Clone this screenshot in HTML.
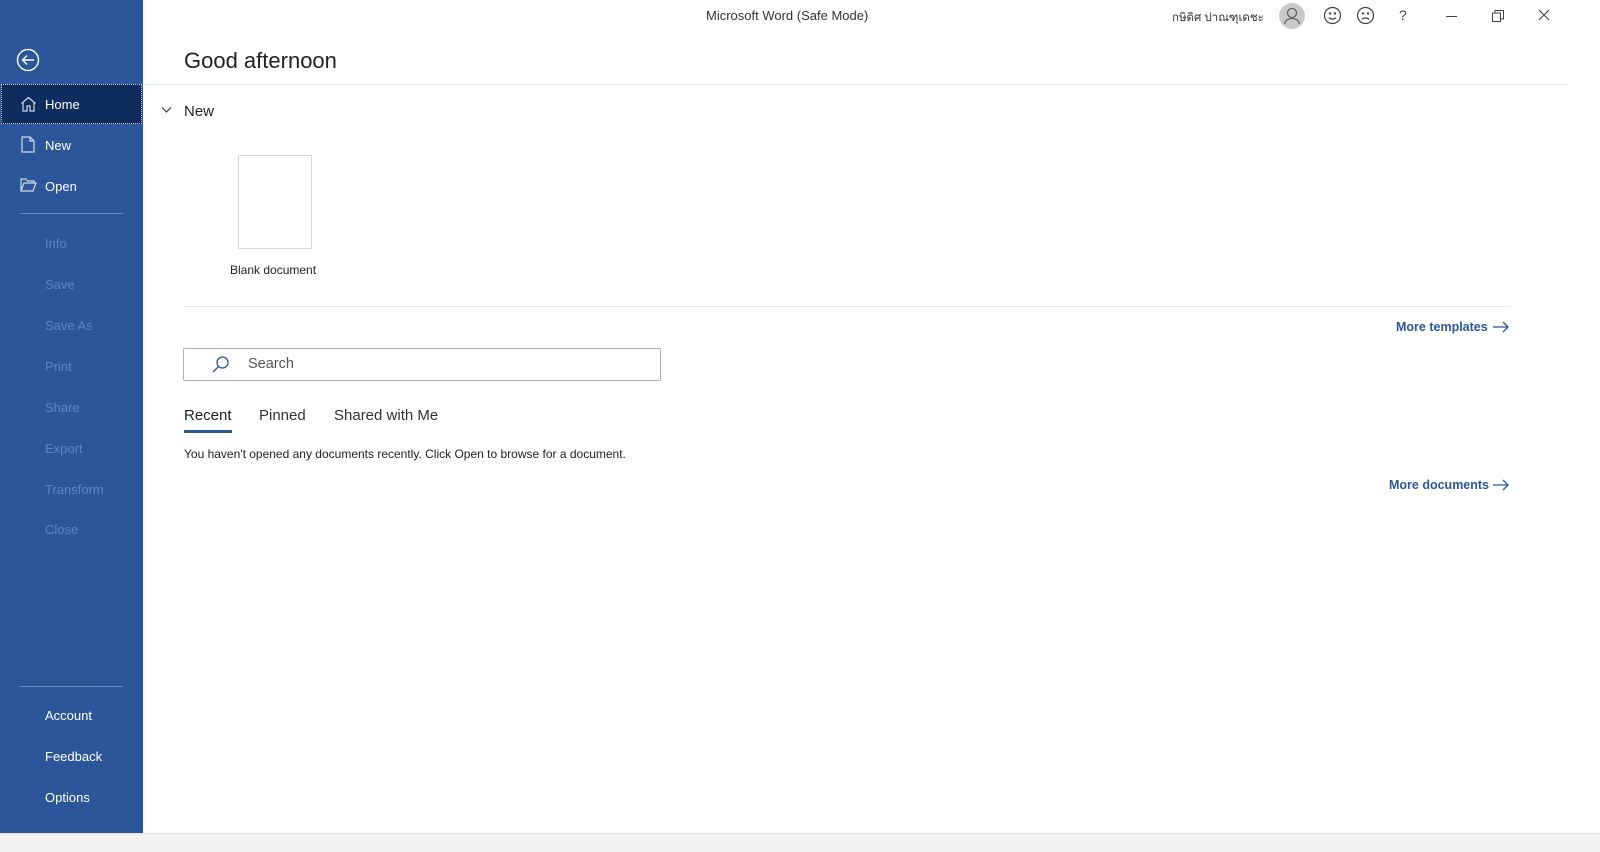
<!DOCTYPE html>
<html><head><meta charset="utf-8">
<style>
*{margin:0;padding:0;box-sizing:border-box}
body{width:1600px;height:852px;background:#fff;font-family:"Liberation Sans",sans-serif;position:relative;overflow:hidden;color:#333}
.side{position:absolute;left:0;top:0;width:143px;height:833px;background:#2b579a;color:#fff}
.bottom{position:absolute;left:0;top:833px;width:1600px;height:19px;background:#f3f3f3;border-top:1px solid #e1e1e1}
.it{position:absolute;left:45px;font-size:13px}
.dim{color:#5f83bf}
.abs{position:absolute}
.t{position:absolute;white-space:nowrap}
</style></head><body>
<div class="side">
  <svg class="abs" style="left:16px;top:48px" width="24" height="24" viewBox="0 0 24 24" fill="none" stroke="#fff" stroke-width="1.4"><circle cx="12" cy="12" r="10.5"/><path d="M18 12H6.5M11 7.5L6.5 12l4.5 4.5"/></svg>
  <div class="abs" style="left:1px;top:84px;width:141px;height:40px;background:#0f2d5c;border:1px dotted #ccc"></div>
  <svg class="abs" style="left:20px;top:96px" width="17" height="16" viewBox="0 0 17 16" fill="none" stroke="#cfd9ea" stroke-width="1.2"><path d="M1.5 7.5L8.5 1.5l7 6M3 6v9h4v-5h3v5h4V6"/></svg>
  <div class="it" style="top:97px">Home</div>
  <svg class="abs" style="left:21px;top:136px" width="14" height="17" viewBox="0 0 14 17" fill="none" stroke="#cfd9ea" stroke-width="1.2"><path d="M1 1h8l4 4v11H1zM9 1v4h4"/></svg>
  <div class="it" style="top:138px">New</div>
  <svg class="abs" style="left:20px;top:178px" width="17" height="14" viewBox="0 0 17 14" fill="none" stroke="#cfd9ea" stroke-width="1.2"><path d="M1 13V1h5l1.5 2H14v2M1 13l3-8h12l-3 8z"/></svg>
  <div class="it" style="top:179px">Open</div>
  <div class="abs" style="left:20px;top:213px;width:103px;height:1px;background:#6a8dc6"></div>
  <div class="it dim" style="top:236px">Info</div>
  <div class="it dim" style="top:277px">Save</div>
  <div class="it dim" style="top:318px">Save As</div>
  <div class="it dim" style="top:359px">Print</div>
  <div class="it dim" style="top:400px">Share</div>
  <div class="it dim" style="top:441px">Export</div>
  <div class="it dim" style="top:482px">Transform</div>
  <div class="it dim" style="top:522px">Close</div>
  <div class="abs" style="left:20px;top:686px;width:103px;height:1px;background:#6a8dc6"></div>
  <div class="it" style="top:708px">Account</div>
  <div class="it" style="top:749px">Feedback</div>
  <div class="it" style="top:790px">Options</div>
</div>
<div class="bottom"></div>

<div class="t" style="left:706px;top:8px;font-size:13px;color:#333">Microsoft Word (Safe Mode)</div>
<div class="t" style="left:1172px;top:9px;font-size:11.5px;color:#333;font-family:'Liberation Sans','DejaVu Sans',sans-serif">กษิดิศ ปาณฑุเดชะ</div>
<div class="abs" style="left:1279px;top:3px;width:26px;height:26px;border-radius:50%;background:#c8c8c8"></div>
<svg class="abs" style="left:1279px;top:3px" width="26" height="26" viewBox="0 0 26 26" fill="none" stroke="#555" stroke-width="1.1"><circle cx="13" cy="10" r="4.5"/><path d="M5.5 21c1-4 4-5.5 7.5-5.5s6.5 1.5 7.5 5.5"/></svg>
<svg class="abs" style="left:1323px;top:6px" width="19" height="19" viewBox="0 0 19 19" fill="none" stroke="#444" stroke-width="1.2"><circle cx="9.5" cy="9.5" r="8"/><circle cx="7" cy="7.5" r=".6" fill="#444"/><circle cx="12" cy="7.5" r=".6" fill="#444"/><path d="M6 11.5c1.8 2.2 5.2 2.2 7 0"/></svg>
<svg class="abs" style="left:1356px;top:6px" width="19" height="19" viewBox="0 0 19 19" fill="none" stroke="#444" stroke-width="1.2"><circle cx="9.5" cy="9.5" r="8"/><circle cx="7" cy="7.5" r=".6" fill="#444"/><circle cx="12" cy="7.5" r=".6" fill="#444"/><path d="M6 13.5c1.8-2.2 5.2-2.2 7 0"/></svg>
<div class="t" style="left:1399px;top:7px;font-size:14px;color:#444">?</div>
<div class="abs" style="left:1446px;top:16px;width:11px;height:1px;background:#444"></div>
<svg class="abs" style="left:1492px;top:10px" width="12" height="12" viewBox="0 0 12 12" fill="none" stroke="#444" stroke-width="1"><rect x=".5" y="3" width="8" height="8.5"/><path d="M3 3V.5h8.5V9H9"/></svg>
<svg class="abs" style="left:1538px;top:9px" width="12" height="12" viewBox="0 0 12 12" stroke="#444" stroke-width="1.1"><path d="M1 1l10 10M11 1L1 11"/></svg>

<div class="t" style="left:184px;top:48px;font-size:22px;color:#222">Good afternoon</div>
<div class="abs" style="left:143px;top:84px;width:1425px;height:1px;background:#e1e1e1"></div>
<svg class="abs" style="left:161px;top:106px" width="11" height="8" viewBox="0 0 11 8" fill="none" stroke="#444" stroke-width="1.2"><path d="M1 1.5l4.5 4.5 4.5-4.5"/></svg>
<div class="t" style="left:184px;top:103px;font-size:15px;color:#222">New</div>
<div class="abs" style="left:238px;top:155px;width:74px;height:94px;border:1px solid #d6d6d6;background:#fff"></div>
<div class="t" style="left:230px;top:263px;font-size:12px;color:#222">Blank document</div>
<div class="abs" style="left:184px;top:306px;width:1326px;height:1px;background:#e6e6e6"></div>
<div class="t" style="left:1396px;top:320px;font-size:12.5px;color:#2b579a;font-weight:bold">More templates</div>
<svg class="abs" style="left:1492px;top:321px" width="18" height="12" viewBox="0 0 18 12" fill="none" stroke="#2b579a" stroke-width="1.3"><path d="M1 6h15M11 1l5 5-5 5"/></svg>

<div class="abs" style="left:183px;top:348px;width:478px;height:33px;border:1px solid #b0b0b0;border-radius:2px"></div>
<svg class="abs" style="left:211px;top:355px" width="19" height="19" viewBox="0 0 19 19" fill="none" stroke="#2b579a" stroke-width="1.3"><circle cx="11.5" cy="7.5" r="5.5"/><path d="M7.5 11.5L2 17"/></svg>
<div class="t" style="left:248px;top:356px;font-size:14.5px;color:#555">Search</div>

<div class="t" style="left:184px;top:407px;font-size:15px;color:#222">Recent</div>
<div class="abs" style="left:184px;top:430px;width:48px;height:3px;background:#2b579a"></div>
<div class="t" style="left:259px;top:407px;font-size:15px;color:#333">Pinned</div>
<div class="t" style="left:334px;top:407px;font-size:15px;color:#333">Shared with Me</div>
<div class="t" style="left:184px;top:447px;font-size:12px;color:#222">You haven't opened any documents recently. Click Open to browse for a document.</div>
<div class="t" style="left:1389px;top:478px;font-size:12.5px;color:#2b579a;font-weight:bold">More documents</div>
<svg class="abs" style="left:1492px;top:479px" width="18" height="12" viewBox="0 0 18 12" fill="none" stroke="#2b579a" stroke-width="1.3"><path d="M1 6h15M11 1l5 5-5 5"/></svg>
</body></html>
